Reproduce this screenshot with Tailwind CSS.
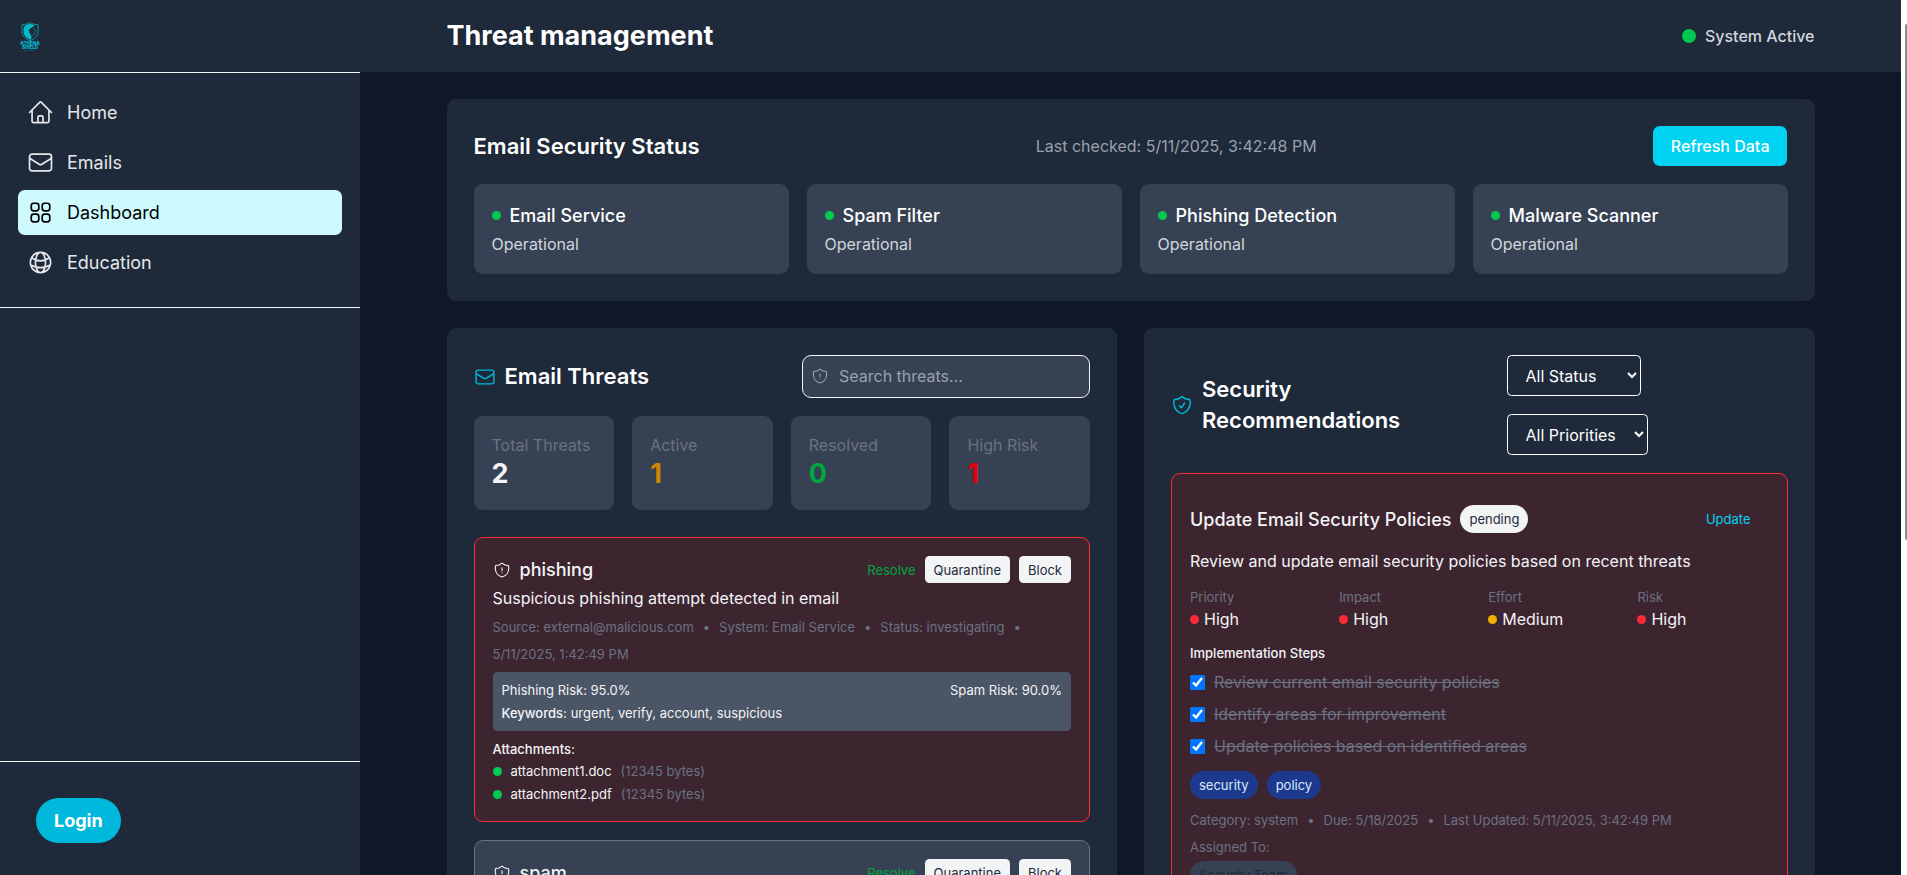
<!DOCTYPE html>
<html lang="en" class="text-[18px]">
<head>
	<meta charset="UTF-8" />
	<meta name="viewport" content="width=device-width, initial-scale=1.0" />
	<title>Threat management</title>
	<script src="https://cdn.jsdelivr.net/npm/@tailwindcss/browser@4"></script>
</head>
<body class="flex h-screen overflow-hidden bg-gray-900 font-['Inter',sans-serif] text-[18px] leading-[27px] text-gray-100">
	<!-- Icons -->
	<svg class="hidden">
		<symbol id="home" viewBox="0 0 24 24">
			<path stroke-linecap="round" stroke-linejoin="round" d="m2.25 12 8.954-8.955c.44-.439 1.152-.439 1.591 0L21.75 12M4.5 9.75v10.125c0 .621.504 1.125 1.125 1.125H9.75v-4.875c0-.621.504-1.125 1.125-1.125h2.25c.621 0 1.125.504 1.125 1.125V21h4.125c.621 0 1.125-.504 1.125-1.125V9.75M8.25 21h8.25" />
		</symbol>
		<symbol id="envelope" viewBox="0 0 24 24">
			<path stroke-linecap="round" stroke-linejoin="round" d="M21.75 6.75v10.5a2.25 2.25 0 0 1-2.25 2.25h-15a2.25 2.25 0 0 1-2.25-2.25V6.75m19.5 0A2.25 2.25 0 0 0 19.5 4.5h-15a2.25 2.25 0 0 0-2.25 2.25m19.5 0v.243a2.25 2.25 0 0 1-1.07 1.916l-7.5 4.615a2.25 2.25 0 0 1-2.36 0L3.32 8.91a2.25 2.25 0 0 1-1.07-1.916V6.75" />
		</symbol>
		<symbol id="squares" viewBox="0 0 24 24">
			<path stroke-linecap="round" stroke-linejoin="round" d="M3.75 6A2.25 2.25 0 0 1 6 3.75h2.25A2.25 2.25 0 0 1 10.5 6v2.25a2.25 2.25 0 0 1-2.25 2.25H6a2.25 2.25 0 0 1-2.25-2.25V6ZM3.75 15.75A2.25 2.25 0 0 1 6 13.5h2.25a2.25 2.25 0 0 1 2.25 2.25V18a2.25 2.25 0 0 1-2.25 2.25H6A2.25 2.25 0 0 1 3.75 18v-2.25ZM13.5 6a2.25 2.25 0 0 1 2.25-2.25H18A2.25 2.25 0 0 1 20.25 6v2.25A2.25 2.25 0 0 1 18 10.5h-2.25a2.25 2.25 0 0 1-2.25-2.25V6ZM13.5 15.75a2.25 2.25 0 0 1 2.25-2.25H18a2.25 2.25 0 0 1 2.25 2.25V18A2.25 2.25 0 0 1 18 20.25h-2.25A2.25 2.25 0 0 1 13.5 18v-2.25Z" />
		</symbol>
		<symbol id="globe" viewBox="0 0 24 24">
			<path stroke-linecap="round" stroke-linejoin="round" d="M12 21a9.004 9.004 0 0 0 8.716-6.747M12 21a9.004 9.004 0 0 1-8.716-6.747M12 21c2.485 0 4.5-4.03 4.5-9S14.485 3 12 3m0 18c-2.485 0-4.5-4.03-4.5-9S9.515 3 12 3m0 0a8.997 8.997 0 0 1 7.843 4.582M12 3a8.997 8.997 0 0 0-7.843 4.582m15.686 0A11.953 11.953 0 0 1 12 10.5c-2.998 0-5.74-1.1-7.843-2.918m15.686 0A8.959 8.959 0 0 1 21 12c0 .778-.099 1.533-.284 2.253m0 0A17.919 17.919 0 0 1 12 16.5c-3.162 0-6.133-.815-8.716-2.247m0 0A9.015 9.015 0 0 1 3 12c0-1.605.42-3.113 1.157-4.418" />
		</symbol>
		<symbol id="shield-alert" viewBox="0 0 24 24">
			<path stroke-linecap="round" stroke-linejoin="round" d="M12 9v3.75m0-10.036A11.959 11.959 0 0 1 3.598 6 11.99 11.99 0 0 0 3 9.75c0 5.592 3.824 10.29 9 11.622 5.176-1.332 9-6.03 9-11.622 0-1.31-.21-2.57-.598-3.75h-.152c-3.196 0-6.1-1.249-8.25-3.286Zm0 13.036h.008v.008H12v-.008Z" />
		</symbol>
		<symbol id="shield-check" viewBox="0 0 24 24">
			<path stroke-linecap="round" stroke-linejoin="round" d="M9 12.75 11.25 15 15 9.75m-3-7.036A11.959 11.959 0 0 1 3.598 6 11.99 11.99 0 0 0 3 9.749c0 5.592 3.824 10.29 9 11.623 5.176-1.332 9-6.03 9-11.622 0-1.31-.21-2.571-.598-3.751h-.152c-3.196 0-6.1-1.248-8.25-3.285Z" />
		</symbol>
	</svg>

	<!-- Sidebar -->
	<aside class="flex w-80 shrink-0 flex-col bg-gray-800">
		<div class="flex h-[73px] items-center border-b border-gray-100 px-4">
			<a href="#" aria-label="Athena Shield">
				<svg class="h-[30px] w-6" viewBox="0 0 27 30">
					<path d="M12 1.5c2 1.500 5 2.200 8 2.200v7c0 4.500-3.500 7.500-8 9-4.500-1.500-8-4.500-8-9v-7c3 0 6-.7 8-2.200Z" fill="none" stroke="#0b93a4" stroke-width="1" />
					<path d="M6 6c2-3.500 8-4 10.500-1.500L14 6.500c-2.500.5-3.500 2.500-2.500 5l2 3.500-.5 4C8 17 5.500 14 5.500 11 5.500 9 5.500 7.500 6 6Z" fill="#06b6c8" />
					<path d="m15 7 1.800 1.500.7 2.500-1 .8v1.700l-2.200.8" fill="none" stroke="#0b93a4" stroke-width=".8" />
					<text x="12" y="24" text-anchor="middle" font-family="Inter" font-size="4.500" font-weight="900" fill="#06b6c8">ATHENA</text>
					<text x="12" y="28" text-anchor="middle" font-family="Inter" font-size="4.500" font-weight="900" fill="#06b6c8">SHIELD</text>
					<path d="M6 29.400h12" stroke="#0e6f7f" stroke-width=".8" stroke-dasharray="2 1" />
				</svg>
			</a>
		</div>
		<nav class="flex flex-col gap-[5px] border-b border-gray-100 px-4 pt-[17px] pb-[22px]">
			<a href="#" class="flex h-10 items-center gap-[13px] rounded-md px-2 text-gray-200">
				<svg class="size-6" fill="none" stroke="currentColor" stroke-width="1.5"><use href="#home" /></svg>
				Home
			</a>
			<a href="#" class="flex h-10 items-center gap-[13px] rounded-md px-2 text-gray-200">
				<svg class="size-6" fill="none" stroke="currentColor" stroke-width="1.5"><use href="#envelope" /></svg>
				Emails
			</a>
			<a href="#" class="flex h-10 items-center gap-[13px] rounded-md bg-cyan-100 px-2 text-black">
				<svg class="size-6" fill="none" stroke="currentColor" stroke-width="1.5"><use href="#squares" /></svg>
				Dashboard
			</a>
			<a href="#" class="flex h-10 items-center gap-[13px] rounded-md px-2 text-gray-200">
				<svg class="size-6" fill="none" stroke="currentColor" stroke-width="1.5"><use href="#globe" /></svg>
				Education
			</a>
		</nav>
		<div class="mt-auto border-t border-gray-100 px-8 pt-8 pb-[32px]">
			<button class="h-10 rounded-full bg-cyan-500 px-4 font-bold text-white">Login</button>
		</div>
	</aside>

	<div class="flex min-w-0 flex-1 flex-col">
		<!-- Header -->
		<header class="shrink-0 bg-gray-800">
			<div class="mx-auto flex h-16 max-w-7xl items-center justify-between px-8">
				<h1 class="text-[27px] leading-[36px] font-bold text-white">Threat management</h1>
				<div class="flex items-center gap-2 text-[16px] font-medium text-gray-300">
					<span class="size-[14px] rounded-full bg-green-500"></span>
					System Active
				</div>
			</div>
		</header>

		<main class="mx-auto w-full max-w-7xl px-8 py-6">
			<!-- Email security status -->
			<section class="mb-6 rounded-lg bg-gray-800 p-6">
				<div class="mb-4 flex items-center justify-between">
					<h2 class="text-[22px] leading-[31px] font-semibold text-white">Email Security Status</h2>
					<span class="text-[16px] text-gray-400">Last checked: 5/11/2025, 3:42:48 PM</span>
					<button class="h-[40px] rounded-md bg-[#00d3f2] px-4 text-[16px] font-medium text-white">Refresh Data</button>
				</div>
				<div class="grid grid-cols-4 gap-4">
					<div class="min-h-20 rounded-lg bg-gray-700 p-4">
						<div class="mb-[4px] flex items-center gap-2">
							<span class="size-2 rounded-full bg-green-500"></span>
							<h3 class="font-medium text-white">Email Service</h3>
						</div>
						<p class="text-[16px] leading-[22px] text-gray-300">Operational</p>
					</div>
					<div class="min-h-20 rounded-lg bg-gray-700 p-4">
						<div class="mb-[4px] flex items-center gap-2">
							<span class="size-2 rounded-full bg-green-500"></span>
							<h3 class="font-medium text-white">Spam Filter</h3>
						</div>
						<p class="text-[16px] leading-[22px] text-gray-300">Operational</p>
					</div>
					<div class="min-h-20 rounded-lg bg-gray-700 p-4">
						<div class="mb-[4px] flex items-center gap-2">
							<span class="size-2 rounded-full bg-green-500"></span>
							<h3 class="font-medium text-white">Phishing Detection</h3>
						</div>
						<p class="text-[16px] leading-[22px] text-gray-300">Operational</p>
					</div>
					<div class="min-h-20 rounded-lg bg-gray-700 p-4">
						<div class="mb-[4px] flex items-center gap-2">
							<span class="size-2 rounded-full bg-green-500"></span>
							<h3 class="font-medium text-white">Malware Scanner</h3>
						</div>
						<p class="text-[16px] leading-[22px] text-gray-300">Operational</p>
					</div>
				</div>
			</section>

			<div class="grid grid-cols-2 gap-6">
				<!-- Email threats -->
				<section class="rounded-lg bg-gray-800 p-6">
					<div class="mb-4 flex items-center justify-between">
						<h2 class="flex items-center gap-2 text-[22px] leading-[31px] font-semibold text-white">
							<svg class="size-[22px] text-cyan-500" fill="none" stroke="currentColor" stroke-width="1.5"><use href="#envelope" /></svg>
							Email Threats
						</h2>
						<div class="relative">
							<svg class="absolute top-[12px] left-2 size-4 text-gray-400" fill="none" stroke="currentColor" stroke-width="1.5"><use href="#shield-alert" /></svg>
							<input type="text" aria-label="Search threats" placeholder="Search threats..." class="h-[43px] w-64 rounded-lg border border-gray-100 bg-gray-700 pr-4 pb-[2px] pl-8 text-[16px] text-white placeholder-gray-400" />
						</div>
					</div>
					<div class="mb-6 grid grid-cols-4 gap-4">
						<div class="rounded-lg bg-gray-700 p-4">
							<p class="text-[16px] leading-[22px] text-gray-500">Total Threats</p>
							<p class="text-[27px] leading-[36px] font-bold text-gray-100">2</p>
						</div>
						<div class="rounded-lg bg-gray-700 p-4">
							<p class="text-[16px] leading-[22px] text-gray-500">Active</p>
							<p class="text-[27px] leading-[36px] font-bold text-yellow-600">1</p>
						</div>
						<div class="rounded-lg bg-gray-700 p-4">
							<p class="text-[16px] leading-[22px] text-gray-500">Resolved</p>
							<p class="text-[27px] leading-[36px] font-bold text-green-600">0</p>
						</div>
						<div class="rounded-lg bg-gray-700 p-4">
							<p class="text-[16px] leading-[22px] text-gray-500">High Risk</p>
							<p class="text-[27px] leading-[36px] font-bold text-red-600">1</p>
						</div>
					</div>

					<div class="flex flex-col gap-4">
						<article class="rounded-lg border border-red-500 bg-[#3d2530] p-4 text-[13px] leading-[18px]">
							<div class="flex items-center justify-between">
								<h3 class="flex items-center gap-2 text-[18px] leading-[27px] font-medium">
									<svg class="size-4" fill="none" stroke="currentColor" stroke-width="1.5"><use href="#shield-alert" /></svg>
									phishing
								</h3>
								<div class="flex items-center gap-2">
									<button class="text-green-600">Resolve</button>
									<button class="h-6 rounded-sm bg-gray-100 px-2 text-gray-800">Quarantine</button>
									<button class="h-6 rounded-sm bg-gray-100 px-2 text-gray-800">Block</button>
								</div>
							</div>
							<p class="mt-[4px] text-[16px] leading-[22px]">Suspicious phishing attempt detected in email</p>
							<div class="mt-2 flex flex-wrap gap-2 text-gray-500">
								<span>Source: external@malicious.com</span>
								<span>•</span>
								<span>System: Email Service</span>
								<span>•</span>
								<span>Status: investigating</span>
								<span>•</span>
								<span>5/11/2025, 1:42:49 PM</span>
							</div>
							<div class="mt-2 rounded-sm bg-gray-600 p-2">
								<div class="flex justify-between">
									<span>Phishing Risk: 95.0%</span>
									<span>Spam Risk: 90.0%</span>
								</div>
								<p class="mt-[5px]"><span class="font-medium">Keywords:</span> urgent, verify, account, suspicious</p>
							</div>
							<h4 class="mt-2 font-medium">Attachments:</h4>
							<ul class="mt-[4px] flex flex-col gap-[5px]">
								<li class="flex items-center gap-2">
									<span class="size-2 rounded-full bg-green-500"></span>
									<span>attachment1.doc</span>
									<span class="text-gray-500">(12345 bytes)</span>
								</li>
								<li class="flex items-center gap-2">
									<span class="size-2 rounded-full bg-green-500"></span>
									<span>attachment2.pdf</span>
									<span class="text-gray-500">(12345 bytes)</span>
								</li>
							</ul>
						</article>
						<article class="rounded-lg border border-gray-500 bg-gray-700 p-4 text-[13px] leading-[18px]">
							<div class="flex items-center justify-between">
								<h3 class="flex items-center gap-2 text-[18px] leading-[27px] font-medium">
									<svg class="size-4" fill="none" stroke="currentColor" stroke-width="1.5"><use href="#shield-alert" /></svg>
									spam
								</h3>
								<div class="flex items-center gap-2">
									<button class="text-green-600">Resolve</button>
									<button class="h-6 rounded-sm bg-gray-100 px-2 text-gray-800">Quarantine</button>
									<button class="h-6 rounded-sm bg-gray-100 px-2 text-gray-800">Block</button>
								</div>
							</div>
						</article>
					</div>
				</section>

				<!-- Security recommendations -->
				<section class="rounded-lg bg-gray-800 p-6">
					<div class="mb-4 flex items-center justify-between">
						<h2 class="flex max-w-[240px] items-center gap-2 text-[22px] leading-[31px] font-semibold text-white">
							<svg class="size-[22px] shrink-0 text-cyan-500" fill="none" stroke="currentColor" stroke-width="1.5"><use href="#shield-check" /></svg>
							Security Recommendations
						</h2>
						<div class="flex w-[281px] flex-col items-start gap-4">
							<select aria-label="Status" class="h-[41px] w-[134px] rounded-sm border border-white bg-gray-800 px-[14px] text-[16px] text-white">
								<option>All Status</option>
								<option>Pending</option>
								<option>Completed</option>
							</select>
							<select aria-label="Priority" class="h-[41px] w-[141px] rounded-sm border border-white bg-gray-800 px-[14px] text-[16px] text-white">
								<option>All Priorities</option>
								<option>High</option>
								<option>Medium</option>
								<option>Low</option>
							</select>
						</div>
					</div>

					<article class="rounded-lg border border-red-500 bg-[#3d2530] p-4 text-[13px] leading-[18px]">
						<div class="flex h-[54px] items-center justify-between">
							<div class="flex items-center gap-2">
								<h3 class="text-[18px] leading-[27px] font-medium">Update Email Security Policies</h3>
								<span class="rounded-full bg-gray-100 px-2 py-[5px] text-gray-800">pending</span>
							</div>
							<button class="px-4 text-cyan-400">Update</button>
						</div>
						<p class="mt-[4px] text-[16px] leading-[22px]">Review and update email security policies based on recent threats</p>
						<dl class="mt-[16px] grid grid-cols-4 gap-4">
							<div>
								<dt class="text-gray-500">Priority</dt>
								<dd class="mt-[2px] flex items-center gap-[5px] text-[16px] leading-[22px]"><span class="size-2 rounded-full bg-red-500"></span>High</dd>
							</div>
							<div>
								<dt class="text-gray-500">Impact</dt>
								<dd class="mt-[2px] flex items-center gap-[5px] text-[16px] leading-[22px]"><span class="size-2 rounded-full bg-red-500"></span>High</dd>
							</div>
							<div>
								<dt class="text-gray-500">Effort</dt>
								<dd class="mt-[2px] flex items-center gap-[5px] text-[16px] leading-[22px]"><span class="size-2 rounded-full bg-yellow-500"></span>Medium</dd>
							</div>
							<div>
								<dt class="text-gray-500">Risk</dt>
								<dd class="mt-[2px] flex items-center gap-[5px] text-[16px] leading-[22px]"><span class="size-2 rounded-full bg-red-500"></span>High</dd>
							</div>
						</dl>
						<h4 class="mt-[14px] font-medium">Implementation Steps</h4>
						<div class="mt-2 flex flex-col gap-[10px] text-[16px] leading-[22px] text-gray-500">
							<label class="flex items-center gap-2 line-through"><input type="checkbox" checked class="size-[15px]" />Review current email security policies</label>
							<label class="flex items-center gap-2 line-through"><input type="checkbox" checked class="size-[15px]" />Identify areas for improvement</label>
							<label class="flex items-center gap-2 line-through"><input type="checkbox" checked class="size-[15px]" />Update policies based on identified areas</label>
						</div>
						<div class="mt-[14px] flex gap-2">
							<span class="rounded-full bg-blue-900 px-2 py-[5px] text-blue-100">security</span>
							<span class="rounded-full bg-blue-900 px-2 py-[5px] text-blue-100">policy</span>
						</div>
						<div class="mt-[12px] flex gap-2 text-gray-500">
							<span>Category: system</span>
							<span>•</span>
							<span>Due: 5/18/2025</span>
							<span>•</span>
							<span>Last Updated: 5/11/2025, 3:42:49 PM</span>
						</div>
						<p class="mt-2 text-gray-500">Assigned To:</p>
						<div class="mt-[5px] flex">
							<span class="rounded-full bg-gray-700 px-2 py-[5px] text-gray-800">Security Team</span>
						</div>
					</article>
				</section>
			</div>
		</main>
	</div>

	<!-- Scroll track -->
	<div class="flex w-[6px] shrink-0 flex-col items-end bg-white pt-[24px]">
		<div class="h-[516px] w-[2px] rounded-l-full bg-[#8b8b8b]"></div>
	</div>
</body>
</html>
